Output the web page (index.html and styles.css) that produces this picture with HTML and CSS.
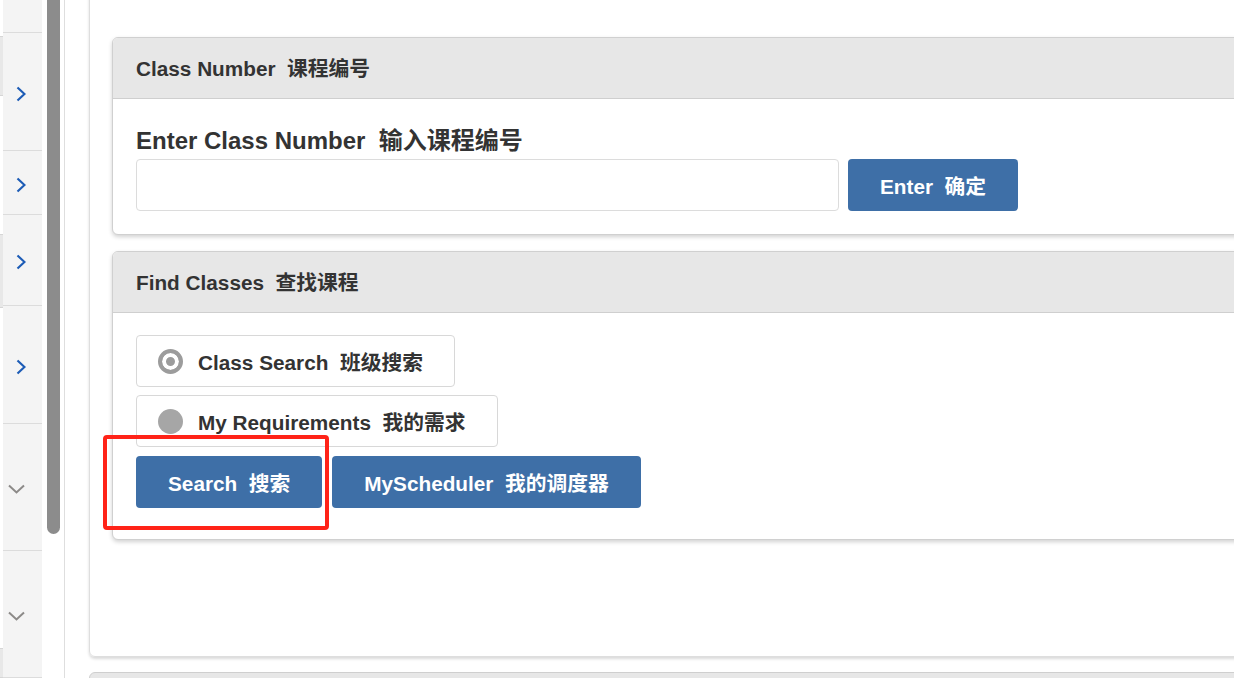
FILE: index.html
```html
<!DOCTYPE html>
<html lang="zh-CN">
<head>
    <meta charset="UTF-8">
    <meta name="viewport" content="width=device-width, initial-scale=1.0">
    <title>Class Search</title>
    <link rel="stylesheet" href="styles.css">
</head>
<body>

<div class="shell">
    <!-- Edge of the page behind -->
    <div class="edge">
        <div class="edge-gap g36"></div>
        <div class="edge-block b61"></div>
        <div class="edge-gap g138"></div>
        <div class="edge-block b75"></div>
        <div class="edge-gap g342"></div>
        <div class="edge-block b30"></div>
    </div>

    <!-- Side navigation -->
    <nav class="sidebar">
        <div class="nav-item h32"></div>
        <div class="nav-item h118">
            <svg class="chev-right" viewBox="0 0 10 16"><path d="M1.5 1.5 L8.5 8 L1.5 14.5"/></svg>
        </div>
        <div class="nav-item h64">
            <svg class="chev-right" viewBox="0 0 10 16"><path d="M1.5 1.5 L8.5 8 L1.5 14.5"/></svg>
        </div>
        <div class="nav-item h91">
            <svg class="chev-right" viewBox="0 0 10 16"><path d="M1.5 1.5 L8.5 8 L1.5 14.5"/></svg>
        </div>
        <div class="nav-item h118">
            <svg class="chev-right" viewBox="0 0 10 16"><path d="M1.5 1.5 L8.5 8 L1.5 14.5"/></svg>
        </div>
        <div class="nav-item h127 down">
            <svg class="chev-down" viewBox="0 0 17 10"><path d="M1 1.5 L8.5 8.5 L16 1.5"/></svg>
        </div>
        <div class="nav-item h127 down">
            <svg class="chev-down" viewBox="0 0 17 10"><path d="M1 1.5 L8.5 8.5 L16 1.5"/></svg>
        </div>
    </nav>

    <!-- Scroll bar of the side panel -->
    <div class="scroll">
        <div class="thumb"></div>
    </div>

    <main class="main">
        <div class="outer-card">

            <section class="card">
                <div class="card-head">Class Number&nbsp;&nbsp;课程编号</div>
                <div class="card-body number-body">
                    <label class="field-label" for="classNumber">Enter Class Number&nbsp;&nbsp;输入课程编号</label>
                    <div class="field-row">
                        <input id="classNumber" class="text-input" type="text">
                        <button class="btn">Enter&nbsp;&nbsp;确定</button>
                    </div>
                </div>
            </section>

            <section class="card">
                <div class="card-head">Find Classes&nbsp;&nbsp;查找课程</div>
                <div class="card-body find-body">
                    <div class="option">
                        <span class="radio checked"></span>
                        <span>Class Search&nbsp;&nbsp;班级搜索</span>
                    </div>
                    <div class="option">
                        <span class="radio"></span>
                        <span>My Requirements&nbsp;&nbsp;我的需求</span>
                    </div>
                    <div class="actions">
                        <button class="btn">Search&nbsp;&nbsp;搜索</button>
                        <button class="btn">MyScheduler&nbsp;&nbsp;我的调度器</button>
                        <div class="highlight"></div>
                    </div>
                </div>
            </section>

        </div>
        <div class="next-card"></div>
    </main>
</div>

</body>
</html>
```

FILE: styles.css
```css
/* Page frame */
html, body {
    margin: 0;
    height: 100%;
    overflow: hidden;
    background: #fff;
}

body {
    font-family: "Liberation Sans", "Noto Sans CJK SC", sans-serif;
    color: #333;
}

.shell {
    display: flex;
    height: 678px;
}

/* Thin strip on the far left */
.edge {
    width: 3px;
    flex-shrink: 0;
    display: flex;
    flex-direction: column;
    background: #fff;
}

.edge-block {
    background: #e8e8e8;
    border-top: 1px solid #d6d6d6;
    border-bottom: 1px solid #d6d6d6;
    box-sizing: border-box;
}

.g36 { height: 36px; }
.b61 { height: 61px; }
.g138 { height: 138px; }
.b75 { height: 75px; }
.g342 { height: 342px; }
.b30 { height: 30px; }

/* Side navigation */
.sidebar {
    width: 39px;
    flex-shrink: 0;
    background: #f4f4f4;
    display: flex;
    flex-direction: column;
}

.nav-item {
    flex-shrink: 0;
    box-sizing: border-box;
    border-bottom: 1px solid #dcdcdc;
    display: flex;
    align-items: center;
    padding: 4px 0 0 13px;
}

.nav-item.down {
    padding-left: 5px;
}

.h32 { height: 33px; }
.h64 { height: 64px; }
.h91 { height: 91px; }
.h118 { height: 118px; }
.h127 { height: 127px; }

.chev-right {
    width: 10px;
    height: 16px;
    fill: none;
    stroke: #1d5cb6;
    stroke-width: 2.2;
}

.chev-down {
    width: 17px;
    height: 10px;
    fill: none;
    stroke: #8c8a88;
    stroke-width: 2;
}

/* Scroll bar */
.scroll {
    width: 23px;
    flex-shrink: 0;
    border-right: 1px solid #dedede;
    padding: 0 5px;
    box-sizing: border-box;
}

.thumb {
    width: 13px;
    height: 534px;
    background: #8c8c8c;
    border-radius: 0 0 7px 7px;
}

/* Main content */
.main {
    flex: 1;
    min-width: 0;
    padding-left: 24px;
}

.outer-card {
    width: 1200px;
    margin-top: -10px;
    padding: 46px 0 116px 22px;
    border: 1px solid #dedede;
    border-radius: 6px;
    box-shadow: 0 2px 3px rgba(0, 0, 0, 0.15);
    display: flex;
    flex-direction: column;
    gap: 16px;
}

.card {
    border: 1px solid #d0d0d0;
    border-radius: 6px;
    box-shadow: 0 2px 4px rgba(0, 0, 0, 0.18);
    background: #fff;
}

.card-head {
    height: 61px;
    box-sizing: border-box;
    display: flex;
    align-items: center;
    padding: 0 0 3px 23px;
    background: #e7e7e7;
    border-bottom: 1px solid #cfcfcf;
    border-radius: 5px 5px 0 0;
    font-size: 20.75px;
    font-weight: bold;
}

.card-body {
    padding-left: 23px;
}

.number-body {
    padding-top: 28px;
    padding-bottom: 23px;
}

.field-label {
    display: block;
    font-size: 24px;
    font-weight: bold;
    line-height: 28px;
    margin-bottom: 4px;
}

.field-row {
    display: flex;
    gap: 9px;
}

.text-input {
    width: 703px;
    height: 52px;
    box-sizing: border-box;
    border: 1px solid #dcdcdc;
    border-radius: 4px;
    margin: 0;
}

.btn {
    height: 52px;
    padding: 0 32px 1px;
    border: none;
    border-radius: 4px;
    background: #3e6fa7;
    color: #fff;
    font-family: inherit;
    font-size: 20.75px;
    font-weight: bold;
    white-space: nowrap;
}

/* Find classes */
.find-body {
    padding-top: 22px;
    padding-bottom: 31px;
    display: flex;
    flex-direction: column;
    align-items: flex-start;
    gap: 8px;
}

.option {
    height: 52px;
    box-sizing: border-box;
    border: 1px solid #d8d8d8;
    border-radius: 4px;
    display: flex;
    align-items: center;
    gap: 15px;
    padding: 0 31px 0 21px;
    font-size: 20.75px;
    font-weight: bold;
}

.radio {
    width: 25px;
    height: 25px;
    border-radius: 50%;
    background: #a6a6a6;
    box-sizing: border-box;
}

.radio.checked {
    background: #9c9c9c;
    border: 4px solid #9c9c9c;
    box-shadow: inset 0 0 0 4px #fff;
}

.actions {
    position: relative;
    display: flex;
    gap: 10px;
    margin-top: 1px;
}

/* Red annotation box */
.highlight {
    position: absolute;
    left: -33px;
    top: -21px;
    width: 226px;
    height: 95px;
    box-sizing: border-box;
    border: 4px solid #ff2318;
    border-radius: 4px;
}

.next-card {
    width: 1200px;
    height: 40px;
    margin-top: 15px;
    border: 1px solid #cfcfcf;
    border-radius: 6px;
    background: #e7e7e7;
}
```
